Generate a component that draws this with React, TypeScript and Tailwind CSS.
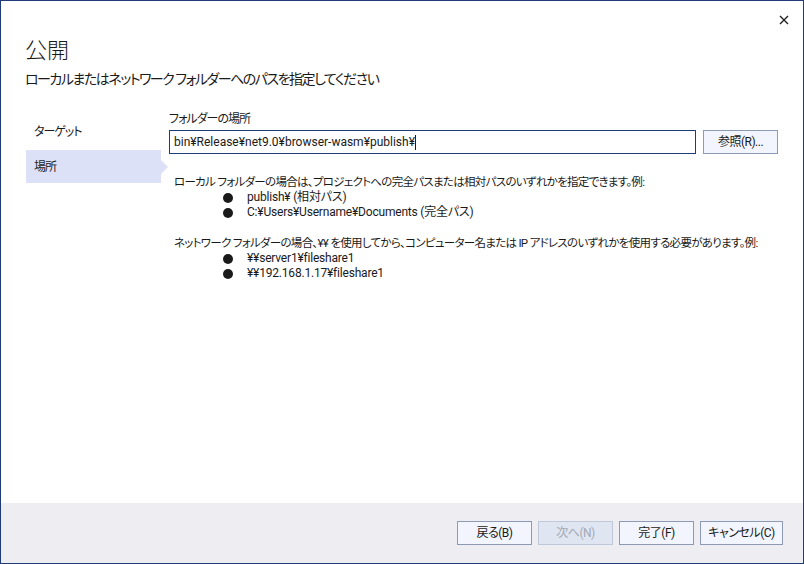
import React from "react";

const FONT = 'Roboto, "Noto Sans CJK JP", sans-serif';

function Bullet({ children }: { children: React.ReactNode }) {
  return (
    <div className="flex items-center h-[15px] text-[12px] tracking-[-0.2px]">
      <span className="ml-[49px] w-[10px] h-[10px] rounded-full bg-[#1a1a1a]" />
      <span className="ml-[14px]">{children}</span>
    </div>
  );
}

function FooterButton({ label, disabled, wide }: { label: string; disabled?: boolean; wide?: boolean }) {
  const size = wide ? "w-[83px]" : "w-[75px]";
  return (
    <button
      disabled={disabled}
      className={
        disabled
          ? `${size} h-[24px] border border-[#bfc8d9] bg-[#dfe5f1] text-[#a2a9b5] text-[12px] tracking-[-0.5px]`
          : `${size} h-[24px] border border-[#8c9ab5] bg-[#f2f5fd] text-[#1a1a1a] text-[12px] tracking-[-0.5px]`
      }
    >
      {label}
    </button>
  );
}

export default function App() {
  return (
    <div
      className="w-[804px] h-[564px] bg-white border border-[#1f3c78] flex flex-col text-[#1a1a1a] overflow-hidden [font-feature-settings:'palt']"
      style={{ fontFamily: FONT }}
    >
      <div className="relative flex-1 flex flex-col">
        <button className="absolute top-[10px] right-[10px] w-[18px] h-[18px] flex items-center justify-center">
          <svg width="10" height="10" viewBox="0 0 10 10">
            <path d="M1 1L9 9M9 1L1 9" stroke="#222" strokeWidth="1.4" />
          </svg>
        </button>

        <div className="pl-[24px] pt-[35px]">
          <h1 className="text-[22px] leading-[30px] font-light">公開</h1>
          <p className="mt-[3px] text-[14px] leading-[20px] tracking-[-1.5px]">
            ローカルまたはネットワーク フォルダーへのパスを指定してください
          </p>
        </div>

        <div className="flex mt-[26px]">
          <nav className="w-[168px] shrink-0 pl-[25px] flex flex-col text-[12px] tracking-[-1px]">
            <div className="h-[34px] pl-[8px] flex items-center">ターゲット</div>
            <div className="relative mt-[1px] h-[33px] w-[135px] pl-[8px] flex items-center bg-[#dce1f7]">
              場所
              <span className="absolute right-[-7px] top-[10px] w-0 h-0 border-y-[7px] border-y-transparent border-l-[7px] border-l-[#dce1f7]" />
            </div>
          </nav>

          <div className="flex-1 min-w-0 pr-[25px] text-[12px]">
            <label className="block leading-[16px] -mt-[4px] tracking-[-1px]">フォルダーの場所</label>
            <div className="flex mt-[3px] gap-[7px]">
              <div className="flex-1 min-w-0 h-[24px] border border-[#1f3c78] flex items-center pl-[4px] leading-none">
                bin¥Release¥net9.0¥browser-wasm¥publish¥
                <span className="inline-block w-px h-[15px] bg-[#1a1a1a]" />
              </div>
              <button className="w-[75px] shrink-0 h-[24px] border border-[#8c9ab5] bg-[#f2f5fd] text-[12px] tracking-[-0.5px]">
                参照(R)...
              </button>
            </div>

            <div className="mt-[21px] pl-[5px] leading-[15px] whitespace-nowrap text-[11.5px] tracking-[-0.7px]">
              <p>ローカル フォルダーの場合は、プロジェクトへの完全パスまたは相対パスのいずれかを指定できます。例:</p>
              <Bullet>publish¥ (相対パス)</Bullet>
              <Bullet>C:¥Users¥Username¥Documents (完全パス)</Bullet>
              <p className="mt-[16px]">
                ネットワーク フォルダーの場合、¥¥ を使用してから、コンピューター名または IP アドレスのいずれかを使用する必要があります。例:
              </p>
              <Bullet>¥¥server1¥fileshare1</Bullet>
              <Bullet>¥¥192.168.1.17¥fileshare1</Bullet>
            </div>
          </div>
        </div>
      </div>

      <div className="h-[60px] bg-[#eeeef2] flex items-center justify-end gap-[6px] pr-[20px]">
        <FooterButton label="戻る(B)" />
        <FooterButton label="次へ(N)" disabled />
        <FooterButton label="完了(F)" />
        <FooterButton label="キャンセル(C)" wide />
      </div>
    </div>
  );
}
